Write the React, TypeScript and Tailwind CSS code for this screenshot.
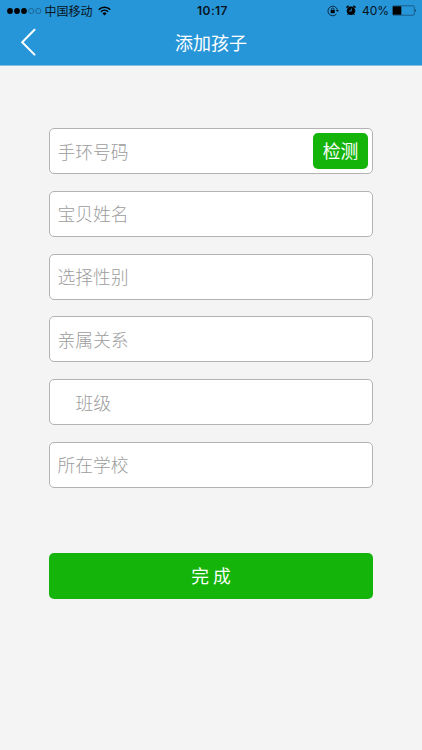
import { useState } from "react";

type Field = {
  id: string;
  placeholder: string;
  indent?: boolean;
  checkable?: boolean;
};

const fields: Field[] = [
  { id: "band", placeholder: "手环号码", checkable: true },
  { id: "name", placeholder: "宝贝姓名" },
  { id: "gender", placeholder: "选择性别" },
  { id: "relation", placeholder: "亲属关系" },
  { id: "class", placeholder: "班级", indent: true },
  { id: "school", placeholder: "所在学校" }
];

function StatusBar() {
  return (
    <div className="flex h-5 items-center justify-between pr-[5px] pl-[7px] text-[#06131c]">
      <div className="flex w-[140px] items-center">
        <svg width="35" height="8" viewBox="0 0 35 8" className="mt-[2px]">
          <circle cx="3" cy="4" r="2.9" fill="#000" />
          <circle cx="10" cy="4" r="2.9" fill="#000" />
          <circle cx="17" cy="4" r="2.9" fill="#000" />
          <circle cx="24.2" cy="4" r="2.6" fill="none" stroke="#12486b" strokeWidth="0.6" />
          <circle cx="31.3" cy="4" r="2.6" fill="none" stroke="#12486b" strokeWidth="0.6" />
        </svg>
        <span className="mt-[2px] ml-[2.5px] text-[12px] leading-4">中国移动</span>
        <svg width="13" height="10" viewBox="0 0 13 10" className="mt-px ml-[5px]" fill="none" stroke="#000" strokeWidth="1.5">
          <path d="M0.8 3.6 A8.2 8.2 0 0 1 12.2 3.6" />
          <path d="M2.9 5.8 A5.2 5.2 0 0 1 10.1 5.8" />
          <path d="M6.5 9.5 L4.4 7.4 A3 3 0 0 1 8.6 7.4 Z" fill="#000" stroke="none" />
        </svg>
      </div>
      <span className="mt-[2px] pl-px font-['Inter','Noto_Sans_CJK_SC',sans-serif] text-[12px] leading-4 font-semibold tracking-[0.4px]">10:17</span>
      <div className="flex w-[140px] items-center justify-end">
        <svg width="12" height="12" viewBox="0 0 12 12" className="mt-px" fill="none" stroke="#06131c" strokeWidth="0.8">
          <path d="M9.5 9 A4.8 4.8 0 1 1 10.4 4.8" />
          <path d="M8.8 5 H12 L10.4 7 Z" fill="#06131c" stroke="none" />
          <path d="M4.5 5.5 V4.3 A1.2 1.2 0 0 1 6.9 4.3 V5.5" />
          <rect x="3.7" y="5" width="4" height="3.2" fill="#000" stroke="none" />
        </svg>
        <svg width="10" height="11" viewBox="0 0 10 11" className="mt-px ml-[7px]">
          <circle cx="5" cy="5.8" r="4.3" fill="#000" />
          <path d="M0.5 2.6 L2.6 0.8 M9.5 2.6 L7.4 0.8" stroke="#000" strokeWidth="1.5" />
          <path d="M2.3 9 L1.5 10 M7.7 9 L8.5 10" stroke="#000" strokeWidth="1" />
          <path d="M5.3 3.4 V6 H3.2" fill="none" stroke="#2796d8" strokeWidth="0.9" />
        </svg>
        <span className="mt-[2px] ml-[6px] font-['Inter','Noto_Sans_CJK_SC',sans-serif] text-[12px] leading-4">40%</span>
        <svg width="25" height="11" viewBox="0 0 25 11" className="mt-px ml-[3px]">
          <rect x="0.5" y="0.8" width="21.8" height="9.4" rx="1" fill="none" stroke="#12486b" strokeWidth="0.7" />
          <rect x="1" y="1.3" width="8.3" height="8.4" fill="#000" />
          <path d="M23.3 4 Q24.8 5.5 23.3 7 Z" fill="#06131c" />
        </svg>
      </div>
    </div>
  );
}

export default function AddChildPage() {
  const [values, setValues] = useState<Record<string, string>>({});

  return (
    <main className="min-h-[750px] bg-[#f4f4f4] font-['Noto_Sans_CJK_SC',sans-serif]">
      <header className="h-[66px] border-b border-[#8abfdf] bg-[#2796d8]">
        <StatusBar />
        <div className="grid h-[44px] grid-cols-[60px_1fr_60px] items-center">
          <button aria-label="返回" className="pl-5">
            <svg width="17" height="28" viewBox="0 0 17 28" fill="none" stroke="#fff" strokeWidth="2" strokeLinecap="round">
              <path d="M14.5 1.7 L2.2 14.2 L14.5 26.6" />
            </svg>
          </button>
          <h1 className="pb-px text-center text-[18px] leading-[26px] text-white">添加孩子</h1>
        </div>
      </header>
      <form className="mx-[49px] pt-[62px]" onSubmit={(e) => e.preventDefault()}>
        <div className="flex flex-col gap-[16.8px]">
          {fields.map((field) => (
            <div key={field.id} className="flex h-[46px] items-center rounded-[5px] border border-[#b3b3b3] bg-white pr-1 pl-[7.5px]">
              <input
                value={values[field.id] ?? ""}
                placeholder={field.placeholder}
                onChange={(e) => setValues((prev) => ({ ...prev, [field.id]: e.target.value }))}
                className={`h-full min-w-0 flex-1 pb-px text-[17.8px] font-light outline-none placeholder:text-[#9c9c9c] ${field.indent ? "pl-[18px]" : ""}`}
              />
              {field.checkable && (
                <button type="button" className="h-9 w-[55px] rounded-[5px] bg-[#14b40b] pb-px text-[17.8px] leading-[35px] text-white">
                  检测
                </button>
              )}
            </div>
          ))}
        </div>
        <button type="submit" className="mt-[65px] h-[46px] w-full rounded-[5px] bg-[#14b40b] pb-px text-[17.8px] text-white">
          完 成
        </button>
      </form>
    </main>
  );
}
